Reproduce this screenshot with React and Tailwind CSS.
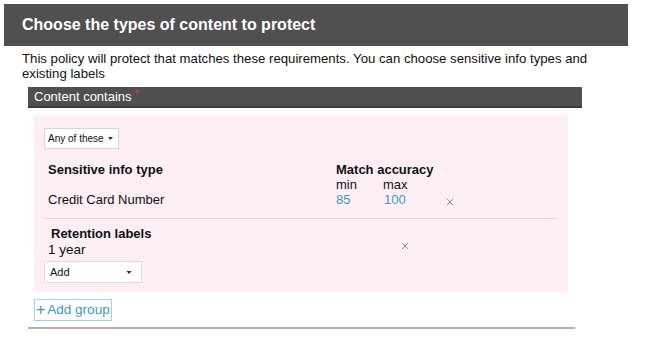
import React from 'react';

const Caret = ({ w = 7, h = 4 }) => (
    <svg width={w} height={h} viewBox="0 0 7 4" className="inline-block shrink-0">
        <path d="M0 0 L7 0 L3.5 4 Z" fill="#333" />
    </svg>
);

const CloseX = () => (
    <svg width="8" height="8" viewBox="0 0 8 8">
        <path d="M1 1 L7 7 M7 1 L1 7" stroke="#8a8a8a" strokeWidth="1" />
    </svg>
);

const App = () => {
    return (
        <div className="w-[645px] h-[345px] bg-white overflow-hidden font-['Liberation_Sans',Arial,sans-serif] text-[#111]">
            <div className="ml-[4px] mt-[4px] w-[624px] h-[42px] bg-[#505050] flex items-center pl-[18px]">
                <h1 className="text-white text-[16px] font-bold">Choose the types of content to protect</h1>
            </div>

            <p className="ml-[22px] mt-[5px] w-[605px] text-[13.2px] leading-[15px] text-[#111]">
                This policy will protect that matches these requirements. You can choose sensitive info types and existing labels
            </p>

            <div className="ml-[28px] mt-[6px] w-[554px] h-[21px] bg-[#4f4f4f] border-b-2 border-[#3a3a3a] flex items-center pl-[6px]">
                <span className="text-white text-[13px] leading-none">Content contains</span>
                <span className="text-[#d9364f] text-[13px] leading-none ml-[3px] -mt-[6px]">*</span>
            </div>

            <div className="ml-[34px] mt-[7px] w-[534px] bg-[#fdeff3] pt-[13px] pb-[9px] px-[10px]">
                <div className="w-[75px] h-[21px] bg-white border border-[#d6d6d6] flex items-center justify-between pl-[3px] pr-[5px] text-[10px] whitespace-nowrap">
                    <span>Any of these</span>
                    <Caret w={5} h={3} />
                </div>

                <div className="mt-[13px] pl-[4px] text-[13px] leading-[15px]">
                    <div className="flex">
                        <div className="w-[288px] font-bold">Sensitive info type</div>
                        <div className="font-bold">Match accuracy</div>
                    </div>
                    <div className="flex">
                        <div className="w-[288px]" />
                        <div className="w-[47px]">min</div>
                        <div>max</div>
                    </div>
                    <div className="flex items-center">
                        <div className="w-[288px]">Credit Card Number</div>
                        <div className="w-[48px] text-[#3a9ad0]">85</div>
                        <div className="w-[62px] text-[#3a9ad0]">100</div>
                        <div className="mt-[4px]"><CloseX /></div>
                    </div>
                </div>

                <div className="mt-[11px] h-px bg-[#dadada]" />

                <div className="mt-[7px] flex">
                    <div className="w-[357px]">
                        <div className="pl-[7px] text-[13px] leading-[16px] font-bold">Retention labels</div>
                        <div className="pl-[4px] text-[13.5px] leading-[16px]">1 year</div>
                    </div>
                    <div className="mt-[16px]"><CloseX /></div>
                </div>

                <div className="mt-[3px] w-[98px] h-[22px] bg-white border border-[#dcdcdc] flex items-center justify-between px-[5px] pr-[9px] text-[11px]">
                    <span>Add</span>
                    <Caret w={6} h={3} />
                </div>
            </div>

            <button className="ml-[34px] mt-[7px] w-[78px] h-[22px] border border-[#a9cfdd] flex items-center pl-[1px] text-[#3a9ac8] text-[13.5px] leading-none whitespace-nowrap">
                <span className="text-[16px] font-light mr-[2px]">+</span>Add group
            </button>

            <div className="ml-[28px] mt-[6px] w-[547px] h-[2px] bg-[#b0b0b0]" />
        </div>
    );
};

export default App;
